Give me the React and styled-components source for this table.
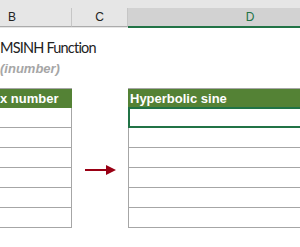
import React from "react";
import styled, { createGlobalStyle } from "styled-components";

const GlobalStyle = createGlobalStyle`
  html, body {
    margin: 0;
    padding: 0;
    background: #fff;
    overflow: hidden;
  }
  body {
    width: 300px;
    height: 247px;
    font-family: "Liberation Sans", Arial, sans-serif;
  }
`;

const Sheet = styled.div`
  width: 300px;
  height: 247px;
  overflow: hidden;
  background: #fff;
`;

const HeaderRow = styled.div`
  display: grid;
  grid-template-columns: 72px 56px 1fr;
  height: 28px;
  background: #e6e6e6;
`;

const ColHeader = styled.div`
  display: flex;
  align-items: center;
  justify-content: ${(p) => (p.$left ? "flex-start" : "center")};
  padding-left: ${(p) => (p.$left ? "8px" : "0")};
  margin-top: 8px;
  height: 18px;
  font-size: 12px;
  color: ${(p) => (p.$active ? "#217346" : "#222")};
  background: ${(p) => (p.$active ? "#d2d2d2" : "#e6e6e6")};
  border-right: ${(p) => (p.$active ? "none" : "1px solid #c6c6c6")};
  border-bottom: ${(p) => (p.$active ? "2px solid #217346" : "1px solid #ababab")};
  width: ${(p) => (p.$active ? "244px" : "auto")};
`;

const Titles = styled.div`
  padding-top: 10px;
  height: 50px;
`;

const Title = styled.div`
  font-family: Lato, "Liberation Sans", sans-serif;
  font-size: 14.5px;
  letter-spacing: -0.8px;
  line-height: 20px;
  color: #222;
  white-space: nowrap;
`;

const Syntax = styled.div`
  font-size: 13px;
  line-height: 20px;
  margin-top: 1px;
  font-style: italic;
  font-weight: bold;
  color: #a6a6a6;
  white-space: nowrap;
`;

const Tables = styled.div`
  display: grid;
  grid-template-columns: 72px 56px 1fr;
`;

const Table = styled.div`
  display: flex;
  flex-direction: column;
`;

const HeadCell = styled.div`
  height: 19px;
  border-top: 1px solid #a6a6a6;
  background: #548235;
  color: #fff;
  font-weight: bold;
  font-size: 13px;
  line-height: 19px;
  white-space: nowrap;
  padding-left: ${(p) => (p.$side === "right" ? "2px" : "0")};
`;

const Cell = styled.div`
  height: 19px;
  border-bottom: 1px solid #a6a6a6;
  border-right: ${(p) => (p.$side === "left" ? "1px solid #a6a6a6" : "none")};
  border-left: ${(p) => (p.$side === "right" ? "1px solid #a6a6a6" : "none")};
  ${(p) =>
    p.$selected &&
    `
    border: none;
    height: 20px;
    margin-top: -1px;
    padding-bottom: 1px;
    box-shadow: inset 2px 2px 0 #217346, inset 0 -2px 0 #217346;
  `}
`;

const ArrowCol = styled.div`
  display: flex;
  align-items: center;
  justify-content: center;
  padding-top: 23px;
`;

const rows = [0, 1, 2, 3, 4, 5];

export default function App() {
  return (
    <>
      <GlobalStyle />
      <Sheet>
        <HeaderRow>
          <ColHeader $left>B</ColHeader>
          <ColHeader>C</ColHeader>
          <ColHeader $active>D</ColHeader>
        </HeaderRow>
        <Titles>
          <Title>MSINH Function</Title>
          <Syntax>(inumber)</Syntax>
        </Titles>
        <Tables>
          <Table>
            <HeadCell $side="left">x number</HeadCell>
            {rows.map((r) => (
              <Cell key={r} $side="left" />
            ))}
          </Table>
          <ArrowCol>
            <svg width="31" height="10" viewBox="0 0 31 10">
              <rect x="0" y="4" width="23" height="2" fill="#990014" />
              <polygon points="21,0 31,5 21,10" fill="#990014" />
            </svg>
          </ArrowCol>
          <Table>
            <HeadCell $side="right">Hyperbolic sine</HeadCell>
            {rows.map((r) => (
              <Cell key={r} $side="right" $selected={r === 0} />
            ))}
          </Table>
        </Tables>
      </Sheet>
    </>
  );
}
